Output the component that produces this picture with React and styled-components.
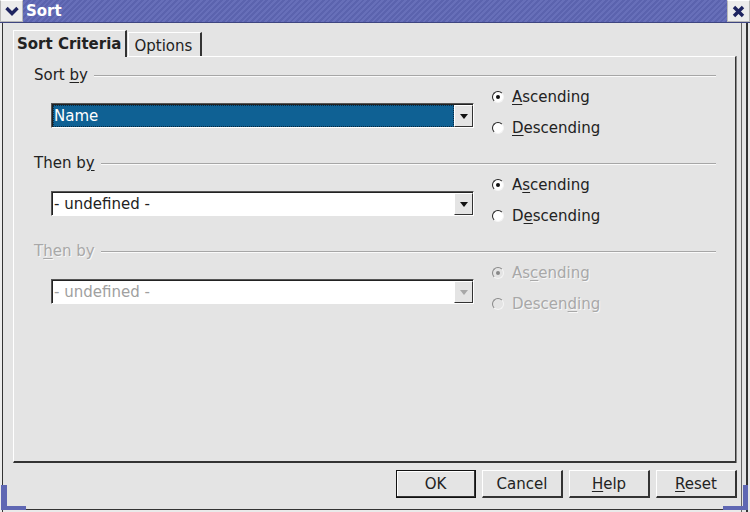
import React from "react";
import styled, { createGlobalStyle, css } from "styled-components";

const Global = createGlobalStyle`
  html, body { margin: 0; padding: 0; }
  body { width: 750px; height: 512px; overflow: hidden; background: #e4e4e4; }
  * { box-sizing: border-box; }
`;

const Window = styled.div`
  position: relative;
  width: 750px;
  height: 512px;
  display: flex;
  flex-direction: column;
  font-family: "DejaVu Sans", "Liberation Sans", sans-serif;
  font-size: 15px;
  color: #222;
  background: #e4e4e4;
`;

const TitleBar = styled.div`
  height: 23px;
  display: flex;
  align-items: stretch;
  background: repeating-linear-gradient(
    135deg,
    #5b63ae 0px,
    #5b63ae 2px,
    #676fb9 2px,
    #676fb9 4px
  );
  border-bottom: 1px solid #3e4580;
`;

const TitleButton = styled.div`
  width: 23px;
  display: flex;
  align-items: center;
  justify-content: center;
  background: #ececec;
  border: 1px solid #b8b8b8;
  border-top-color: #fff;
  ${(p) => (p.$right ? "margin-left: auto;" : "")}
`;

const TitleText = styled.div`
  flex: 1;
  color: #fff;
  font-weight: bold;
  font-size: 15px;
  line-height: 22px;
  padding-left: 3px;
`;

const Body = styled.div`
  flex: 1;
  display: flex;
  flex-direction: column;
  padding: 7px 13px 0 13px;
  box-shadow: inset 2px 0 #ececec, inset 3px 0 #333, inset -2px 0 #e8e8e8,
    inset -4px 0 #333, inset -8px 0 #e4e4e4, inset -9px 0 #666,
    inset 0 -2px #eaeaea, inset 0 -3px #333;
`;

const TabRow = styled.div`
  display: flex;
  align-items: flex-end;
  height: 26px;
`;

const Tab = styled.div`
  display: flex;
  align-items: center;
  font-weight: ${(p) => (p.$active ? "bold" : "normal")};
  border-top: 1px solid #fff;
  border-left: 1px solid #fff;
  border-right: 2px solid #333;
  position: relative;
  ${(p) =>
    p.$active
      ? css`
          padding: 0 4px 1px 3px;
          margin-bottom: -1px;
          background: #e4e4e4;
          z-index: 1;
          height: 27px;
        `
      : css`
          height: 24px;
          padding: 2px 8px 0 5px;
          margin-left: 1px;
        `}
`;

const Panel = styled.div`
  flex: 1;
  display: flex;
  flex-direction: column;
  gap: 12px;
  padding: 8px 19px 0 20px;
  border-top: 1px solid #fff;
  border-left: 1px solid #fff;
  border-right: 1px solid #333;
  border-bottom: 2px solid #333;
  margin-right: 1px;
  box-shadow: 1px 0 #888;
`;

const Group = styled.div`
  display: flex;
  flex-direction: column;
`;

const Legend = styled.div`
  height: 20px;
  display: flex;
  align-items: center;
  gap: 6px;
  color: ${(p) => (p.$disabled ? "#a8a8a8" : "#222")};
  text-shadow: ${(p) => (p.$disabled ? "1px 1px 0 #f8f8f8" : "none")};
`;

const LegendLine = styled.div`
  flex: 1;
  height: 2px;
  border-top: 1px solid #a6a6a6;
  border-bottom: 1px solid #fafafa;
  margin-top: 1px;
`;

const Content = styled.div`
  height: 56px;
  display: flex;
  align-items: center;
  padding-left: 17px;
`;

const Combo = styled.div`
  width: 423px;
  height: 25px;
  display: flex;
  align-items: stretch;
  border-top: 1px solid #555;
  border-left: 1px solid #555;
  border-right: 1px solid #fff;
  border-bottom: 1px solid #fff;
  box-shadow: inset 1px 1px 0 #222;
  background: #fff;
  padding: 1px 0 0 1px;
  margin-top: 5px;
`;

const ComboText = styled.div`
  flex: 1;
  display: flex;
  align-items: center;
  padding-left: 1px;
  color: ${(p) => (p.$disabled ? "#a0a0a0" : "#222")};
  ${(p) =>
    p.$focused &&
    css`
      background: #0f6194;
      color: #fff;
      outline: 1px dotted #0a2a40;
      outline-offset: -1px;
    `}
`;

const ComboButton = styled.div`
  width: 19px;
  display: flex;
  align-items: center;
  justify-content: center;
  background: #e4e4e4;
  border-top: 1px solid #fff;
  border-left: 1px solid #fff;
  border-right: 1px solid #333;
  border-bottom: 1px solid #333;
`;

const Arrow = styled.div`
  width: 0;
  height: 0;
  border-left: 4px solid transparent;
  border-right: 4px solid transparent;
  border-top: 5px solid ${(p) => (p.$disabled ? "#a8a8a8" : "#111")};
`;

const RadioCol = styled.div`
  margin-left: 18px;
  display: flex;
  flex-direction: column;
  gap: 7px;
  margin-top: -1px;
`;

const RadioRow = styled.div`
  height: 24px;
  display: flex;
  align-items: center;
  gap: 8px;
  color: ${(p) => (p.$disabled ? "#a8a8a8" : "#222")};
  text-shadow: ${(p) => (p.$disabled ? "1px 1px 0 #f8f8f8" : "none")};
`;

const RadioCircle = styled.div`
  width: 12px;
  height: 12px;
  border-radius: 50%;
  background: ${(p) => (p.$disabled ? "#e4e4e4" : "#fff")};
  border: 1px solid transparent;
  border-top-color: ${(p) => (p.$disabled ? "#888" : "#222")};
  border-left-color: ${(p) => (p.$disabled ? "#888" : "#222")};
  border-right-color: #f4f4f4;
  border-bottom-color: #f4f4f4;
  display: flex;
  align-items: center;
  justify-content: center;
  &::after {
    content: "";
    width: 4px;
    height: 4px;
    border-radius: 50%;
    background: ${(p) => (p.$checked ? (p.$disabled ? "#888" : "#111") : "transparent")};
  }
`;

const U = styled.span`
  text-decoration: underline;
  text-underline-offset: 2px;
`;

const ButtonRow = styled.div`
  height: 49px;
  display: flex;
  justify-content: flex-end;
  align-items: flex-start;
  padding-top: 7px;
  gap: 6px;
`;

const Button = styled.div`
  width: ${(p) => p.$w}px;
  height: 28px;
  display: flex;
  align-items: center;
  justify-content: center;
  background: #e4e4e4;
  border-top: 1px solid #fff;
  border-left: 1px solid #fff;
  border-right: 2px solid #333;
  border-bottom: 2px solid #333;
  ${(p) =>
    p.$default &&
    css`
      outline: 1px solid #111;
      outline-offset: -1px;
      border-top-color: #111;
      border-left-color: #111;
      box-shadow: inset 1px 1px 0 #fff;
    `}
`;

const Corner = styled.div`
  position: absolute;
  bottom: 2px;
  width: 25px;
  height: 25px;
  border-bottom: 4px solid #5f67b3;
  ${(p) =>
    p.$right
      ? css`
          right: 2px;
          border-right: 5px solid #5f67b3;
        `
      : css`
          left: 1px;
          border-left: 6px solid #5f67b3;
        `}
`;

function Radio({ checked, disabled, children }) {
  return (
    <RadioRow $disabled={disabled}>
      <RadioCircle $checked={checked} $disabled={disabled} />
      <span>{children}</span>
    </RadioRow>
  );
}

function SortGroup({ label, value, focused, disabled, asc, desc }) {
  return (
    <Group>
      <Legend $disabled={disabled}>
        <span>{label}</span>
        <LegendLine />
      </Legend>
      <Content>
        <Combo>
          <ComboText $focused={focused} $disabled={disabled}>
            {value}
          </ComboText>
          <ComboButton>
            <Arrow $disabled={disabled} />
          </ComboButton>
        </Combo>
        <RadioCol>
          <Radio checked disabled={disabled}>
            {asc}
          </Radio>
          <Radio disabled={disabled}>{desc}</Radio>
        </RadioCol>
      </Content>
    </Group>
  );
}

export default function App() {
  return (
    <>
      <Global />
      <Window>
        <TitleBar>
          <TitleButton>
            <svg width="14" height="10" viewBox="0 0 14 10">
              <path d="M1.5 2 L7 7.5 L12.5 2" stroke="#1e2460" strokeWidth="3.4" fill="none" />
            </svg>
          </TitleButton>
          <TitleText>Sort</TitleText>
          <TitleButton $right>
            <svg width="13" height="13" viewBox="0 0 13 13">
              <path d="M2 2 L11 11 M11 2 L2 11" stroke="#1e2460" strokeWidth="3.4" />
            </svg>
          </TitleButton>
        </TitleBar>
        <Body>
          <TabRow>
            <Tab $active>Sort Criteria</Tab>
            <Tab>Options</Tab>
          </TabRow>
          <Panel>
            <SortGroup
              label={<>Sort <U>b</U>y</>}
              value="Name"
              focused
              asc={<><U>A</U>scending</>}
              desc={<><U>D</U>escending</>}
            />
            <SortGroup
              label={<>Then b<U>y</U></>}
              value="- undefined -"
              asc={<>A<U>s</U>cending</>}
              desc={<>D<U>e</U>scending</>}
            />
            <SortGroup
              label={<>T<U>h</U>en by</>}
              value="- undefined -"
              disabled
              asc={<>As<U>c</U>ending</>}
              desc={<>Descen<U>d</U>ing</>}
            />
          </Panel>
          <ButtonRow>
            <Button $w={80} $default>OK</Button>
            <Button $w={81}>Cancel</Button>
            <Button $w={81}><span><U>H</U>elp</span></Button>
            <Button $w={81}><span><U>R</U>eset</span></Button>
          </ButtonRow>
        </Body>
        <Corner />
        <Corner $right />
      </Window>
    </>
  );
}
